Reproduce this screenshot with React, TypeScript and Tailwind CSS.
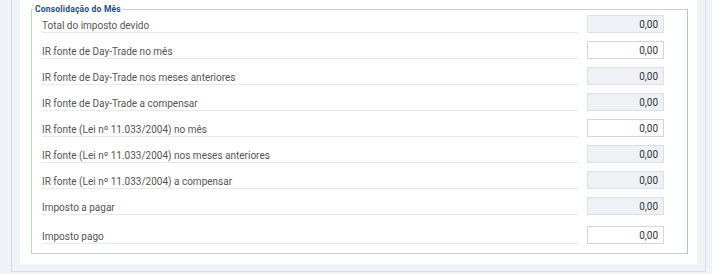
import React from 'react';

type Row = { label: string; value: string; readOnly: boolean; extra?: boolean };

const rows: Row[] = [
  { label: 'Total do imposto devido', value: '0,00', readOnly: true },
  { label: 'IR fonte de Day-Trade no mês', value: '0,00', readOnly: false },
  { label: 'IR fonte de Day-Trade nos meses anteriores', value: '0,00', readOnly: true },
  { label: 'IR fonte de Day-Trade a compensar', value: '0,00', readOnly: true },
  { label: 'IR fonte (Lei nº 11.033/2004) no mês', value: '0,00', readOnly: false },
  { label: 'IR fonte (Lei nº 11.033/2004) nos meses anteriores', value: '0,00', readOnly: true },
  { label: 'IR fonte (Lei nº 11.033/2004) a compensar', value: '0,00', readOnly: true },
  { label: 'Imposto a pagar', value: '0,00', readOnly: true },
  { label: 'Imposto pago', value: '0,00', readOnly: false, extra: true },
];

const App: React.FC = () => {
  return (
    <div className="w-[712px] h-[274px] overflow-hidden bg-[#eff2f6] font-['Roboto',sans-serif]">
      <div className="ml-[11px] w-[695px] border-x border-b border-[#d7dce3] bg-[#eff2f6] px-[8px] pb-[7px]">
        <div className="bg-white pt-[3px] pl-[11px] pr-[9px] pb-[10px]">
          <fieldset className="border border-[#c9d0d9] border-r-[#b9c1cc] pl-[10px] pr-[23px] pb-[9px]">
            <legend className="-ml-[8px] px-[1px] text-[8.5px] leading-[12px] font-bold tracking-[0.2px] text-[#1d4f7c]">
              Consolidação do Mês
            </legend>
            {rows.map((r, i) => (
              <div
                key={i}
                className={`flex items-end gap-[9px] ${i === 0 ? '' : r.extra ? 'mt-[11px]' : 'mt-[8px]'}`}
              >
                <div className="flex-1 border-b border-[#e6e9ed] text-[10px] leading-[12px] text-[#555]">
                  {r.label}
                </div>
                <input
                  readOnly
                  value={r.value}
                  className={`w-[77px] h-[18px] border text-right text-[10px] pr-[5px] text-[#333] outline-none ${
                    r.readOnly ? 'bg-[#eef2f7] border-[#dde1e6]' : 'bg-white border-[#d3d7dc]'
                  }`}
                />
              </div>
            ))}
          </fieldset>
        </div>
      </div>
    </div>
  );
};

export default App;
